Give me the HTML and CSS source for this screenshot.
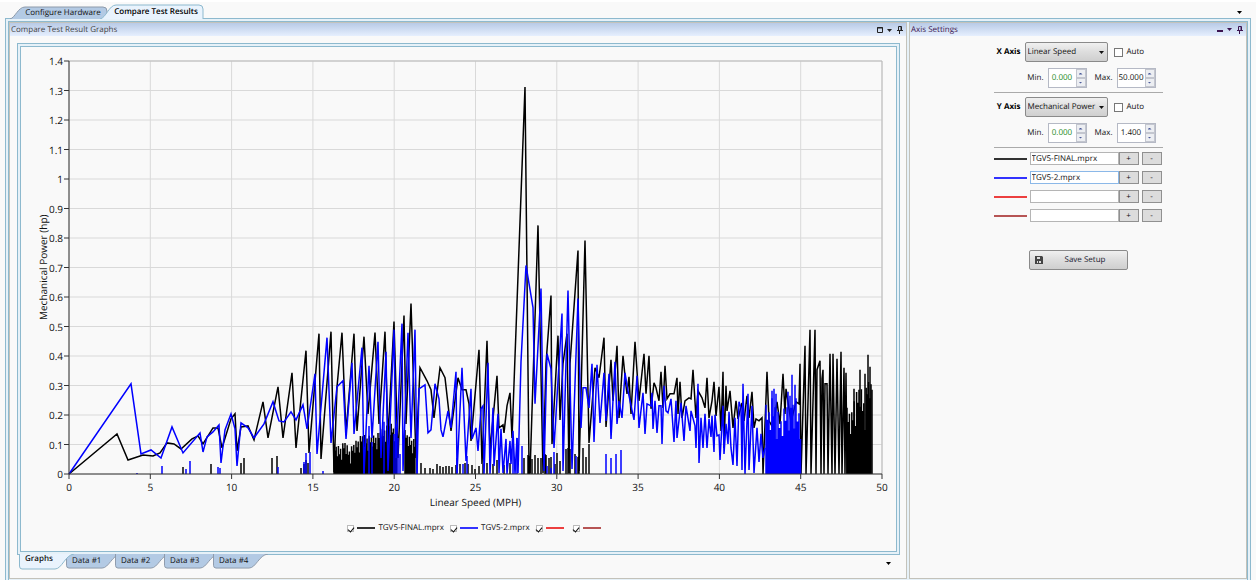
FILE: index.html
```html
<!DOCTYPE html>
<html lang="en">
<head>
    <meta charset="UTF-8">
    <meta name="viewport" content="width=device-width, initial-scale=1.0">
    <title>Compare Test Results</title>
    <link rel="stylesheet" href="styles.css">
</head>
<body>
    <!-- Main tabs -->
    <nav class="top-tabs">
        <button class="top-tab" type="button">
            <svg class="tab-shape" viewBox="0 0 98 13" preserveAspectRatio="none"><path d="M0 13 C5 12 8 1 15 1 H93 Q97 1 97 5 V13"/></svg>
            <span>Configure Hardware</span>
        </button>
        <button class="top-tab top-tab-active" type="button">
            <svg class="tab-shape" viewBox="0 0 104 15" preserveAspectRatio="none"><path d="M0 15 C6 14 9 1 16 1 H99 Q103 1 103 5 V15"/></svg>
            <span>Compare Test Results</span>
        </button>
        <button class="arrow-button" type="button" aria-label="Tab list"></button>
    </nav>

    <main class="frame">
        <section class="panel graph-panel">
            <header class="panel-header">
                <h1>Compare Test Result Graphs</h1>
                <svg class="panel-icons" width="28" height="8" viewBox="0 0 28 8">
                    <path d="M1.5 1.5h5v5h-5zM1 2h6" fill="none" stroke="currentColor"/>
                    <path d="M11 3h5l-2.5 3z" fill="currentColor"/>
                    <path d="M22.5 4.5V.5h3v4M21 4.5h6M23.5 5v3M25 1v4" fill="none" stroke="currentColor"/>
                </svg>
            </header>

            <div class="chart-frame">
                <div class="chart">
                    <div class="y-title">Mechanical Power (hp)</div>
                    <div class="y-labels" id="y-labels"></div>
                    <svg class="plot" id="plot" viewBox="0 0 813 412" preserveAspectRatio="none"></svg>
                    <div class="x-labels" id="x-labels"></div>
                    <div class="x-title">Linear Speed (MPH)</div>
                    <div class="legend">
                        <label class="legend-item"><input type="checkbox" checked><i class="line line-black"></i><span>TGV5-FINAL.mprx</span></label>
                        <label class="legend-item"><input type="checkbox" checked><i class="line line-blue"></i><span>TGV5-2.mprx</span></label>
                        <label class="legend-item"><input type="checkbox" checked aria-label="Series 3"><i class="line line-red"></i><span></span></label>
                        <label class="legend-item"><input type="checkbox" checked aria-label="Series 4"><i class="line line-brown"></i><span></span></label>
                    </div>
                </div>
            </div>

            <!-- Tabs below the graph -->
            <nav class="bottom-tabs">
                <button class="bottom-tab bottom-tab-active" type="button">
                    <svg class="tab-shape" viewBox="0 0 55 16" preserveAspectRatio="none"><path d="M.5 0 V12 Q.5 15 3 15 H36 C43 15 46 1 55 0"/></svg>
                    <span>Graphs</span>
                </button>
                <button class="bottom-tab" type="button">
                    <svg class="tab-shape" viewBox="0 0 55 16" preserveAspectRatio="none"><path d="M.5 0 V12 Q.5 15 3 15 H36 C43 15 46 1 55 0"/></svg>
                    <span>Data #1</span>
                </button>
                <button class="bottom-tab" type="button">
                    <svg class="tab-shape" viewBox="0 0 55 16" preserveAspectRatio="none"><path d="M.5 0 V12 Q.5 15 3 15 H36 C43 15 46 1 55 0"/></svg>
                    <span>Data #2</span>
                </button>
                <button class="bottom-tab" type="button">
                    <svg class="tab-shape" viewBox="0 0 55 16" preserveAspectRatio="none"><path d="M.5 0 V12 Q.5 15 3 15 H36 C43 15 46 1 55 0"/></svg>
                    <span>Data #3</span>
                </button>
                <button class="bottom-tab" type="button">
                    <svg class="tab-shape" viewBox="0 0 55 16" preserveAspectRatio="none"><path d="M.5 0 V12 Q.5 15 3 15 H36 C43 15 46 1 55 0"/></svg>
                    <span>Data #4</span>
                </button>
                <button class="arrow-button" type="button" aria-label="Tab list"></button>
            </nav>
        </section>

        <section class="panel side-panel">
            <header class="panel-header panel-header-active">
                <h2>Axis Settings</h2>
                <svg class="panel-icons" width="28" height="8" viewBox="0 0 28 8">
                    <path d="M1 4h6v2H1z" fill="currentColor"/>
                    <path d="M11 2h5l-2.5 3z" fill="currentColor"/>
                    <path d="M22.5 4.5V.5h3v4M21 4.5h6M23.5 5v3M25 1v4" fill="none" stroke="currentColor"/>
                </svg>
            </header>

            <form class="settings">
                <!-- X axis -->
                <div class="axis-group">
                    <div class="axis-row">
                        <label class="axis-name" for="x-source">X Axis</label>
                        <select id="x-source"><option>Linear Speed</option></select>
                        <label class="auto"><input type="checkbox">Auto</label>
                    </div>
                    <div class="range-row">
                        <label for="x-min">Min.</label>
                        <div class="spinner">
                            <input class="green" id="x-min" type="text" value="0.000">
                            <div class="spin-buttons"><button type="button" aria-label="Up"></button><button type="button" aria-label="Down"></button></div>
                        </div>
                        <label for="x-max">Max.</label>
                        <div class="spinner">
                            <input id="x-max" type="text" value="50.000">
                            <div class="spin-buttons"><button type="button" aria-label="Up"></button><button type="button" aria-label="Down"></button></div>
                        </div>
                    </div>
                </div>

                <!-- Y axis -->
                <div class="axis-group">
                    <div class="axis-row">
                        <label class="axis-name" for="y-source">Y Axis</label>
                        <select id="y-source"><option>Mechanical Power</option></select>
                        <label class="auto"><input type="checkbox">Auto</label>
                    </div>
                    <div class="range-row">
                        <label for="y-min">Min.</label>
                        <div class="spinner">
                            <input class="green" id="y-min" type="text" value="0.000">
                            <div class="spin-buttons"><button type="button" aria-label="Up"></button><button type="button" aria-label="Down"></button></div>
                        </div>
                        <label for="y-max">Max.</label>
                        <div class="spinner">
                            <input id="y-max" type="text" value="1.400">
                            <div class="spin-buttons"><button type="button" aria-label="Up"></button><button type="button" aria-label="Down"></button></div>
                        </div>
                    </div>
                </div>

                <!-- Files -->
                <div class="files">
                    <div class="file-row">
                        <i class="line line-black"></i>
                        <input type="text" value="TGV5-FINAL.mprx" aria-label="File 1">
                        <button type="button">+</button>
                        <button type="button">-</button>
                    </div>
                    <div class="file-row">
                        <i class="line line-blue"></i>
                        <input class="selected" type="text" value="TGV5-2.mprx" aria-label="File 2">
                        <button type="button">+</button>
                        <button type="button">-</button>
                    </div>
                    <div class="file-row">
                        <i class="line line-red"></i>
                        <input type="text" aria-label="File 3">
                        <button type="button">+</button>
                        <button type="button">-</button>
                    </div>
                    <div class="file-row">
                        <i class="line line-brown"></i>
                        <input type="text" aria-label="File 4">
                        <button type="button">+</button>
                        <button type="button">-</button>
                    </div>
                </div>

                <button class="save-button" type="button">
                    <svg width="8" height="8" viewBox="0 0 8 8"><path d="M0 0h7l1 1v7H0z" fill="#444"/><path d="M2 1h3v2H2zM2 5h4v2H2z" fill="#ddd"/><path d="M3 5h1v2H3z" fill="#444"/></svg>
                    <span>Save Setup</span>
                </button>
            </form>
        </section>
    </main>

    <script src="chart.js"></script>
</body>
</html>
```

FILE: styles.css
```css
* {
    box-sizing: border-box;
}

body {
    margin: 0;
    padding: 2px 5px 0;
    height: 100vh;
    overflow: hidden;
    display: flex;
    flex-direction: column;
    font-family: "Open Sans", "Noto Sans", sans-serif;
    font-size: 8px;
    line-height: 12px;
    text-rendering: geometricPrecision;
    color: #111;
    background: linear-gradient(#fff 2px, #f9f9f9 2px);
}

button, input, select {
    margin: 0;
    padding: 0;
    font: inherit;
    color: inherit;
    text-rendering: inherit;
    border-radius: 0;
}

/* Tabs */
.top-tabs {
    display: flex;
    align-items: flex-end;
    height: 17px;
    padding: 0 9px 0 5px;
    margin-bottom: -1px;
    z-index: 1;
}

.top-tab, .bottom-tab {
    position: relative;
    border: none;
    background: none;
}

.top-tab {
    width: 98px;
    height: 13px;
    padding-left: 8px;
}

.top-tab-active {
    width: 104px;
    height: 15px;
    margin-left: -8px;
    font-weight: 600;
    color: #000;
}

.top-tab span, .bottom-tab span {
    position: relative;
    display: block;
    white-space: nowrap;
}

.tab-shape {
    position: absolute;
    inset: 0;
    width: 100%;
    height: 100%;
}

.tab-shape path {
    fill: #b3cae4;
    stroke: #8d9aaa;
}

.top-tab-active .tab-shape path, .bottom-tab-active .tab-shape path {
    fill: #e9f3fd;
    stroke: #8db9ce;
}

.arrow-button {
    width: 5px;
    height: 3px;
    margin-left: auto;
    border: none;
    background: #000;
    clip-path: polygon(0 0, 100% 0, 50% 100%);
}

.top-tabs .arrow-button {
    margin-bottom: 5px;
}

/* Double line around the content */
.frame, .chart-frame {
    border: 1px solid #8db9ce;
    background: #e6f1f8;
    padding: 2px;
}

/* The bottom edge runs off the window */
.frame {
    flex: 1;
    min-height: 0;
    display: flex;
    gap: 2px;
    margin-bottom: -5px;
    padding: 3px 3px 5px;
    outline: 1px solid #8db9ce;
    outline-offset: -4px;
}

.panel {
    display: flex;
    flex-direction: column;
    border: 1px solid #c3c2ba;
    background: #f9f9f9;
}

.graph-panel {
    flex: 1;
    min-width: 0;
}

.side-panel {
    width: 338px;
}

.panel-header {
    display: flex;
    justify-content: space-between;
    align-items: center;
    height: 13px;
    padding: 0 2px 0 1px;
    color: #444;
    background: linear-gradient(#b8cae6, #e6effe);
}

.panel-header h1, .panel-header h2 {
    margin: 0;
    font-size: 8px;
    font-weight: normal;
}

.panel-header-active {
    color: #3c1450;
}

.graph-panel .panel-icons {
    color: #222;
}

.chart-frame {
    flex: 1;
    min-height: 0;
    display: flex;
    margin: 7px 6px 0 7px;
}

/* Chart */
.chart {
    flex: 1;
    display: grid;
    grid-template-columns: 12px 14px 1fr;
    grid-template-rows: 1fr auto auto auto;
    padding: 14px 14px 17px 16px;
    border: 1px solid #8db9ce;
    background: #f9f9f9;
    font-size: 10px;
    line-height: 14px;
}

.y-title {
    writing-mode: vertical-rl;
    transform: rotate(180deg);
    text-align: center;
    line-height: 12px;
}

.y-labels {
    display: flex;
    flex-direction: column;
    justify-content: space-between;
    text-align: right;
}

.y-labels span {
    height: 0;
    line-height: 0;
}

.plot {
    display: block;
    width: calc(100% - 6px);
    height: 100%;
    min-height: 0;
    margin-left: 6px;
    overflow: visible;
}

.plot path {
    fill: none;
    vector-effect: non-scaling-stroke;
}

.plot .grid-lines {
    stroke: #d9d9d9;
}

.plot .edge {
    stroke: #bbb;
}

.plot .axis {
    stroke: #333;
}

.plot .black {
    stroke: #000;
    stroke-width: 1.5px;
}

.plot .blue {
    stroke: #00f;
    stroke-width: 1.5px;
}

.x-labels, .x-title, .legend {
    grid-column: 3;
    margin-left: 6px;
}

.x-labels {
    display: flex;
    justify-content: space-between;
    padding-top: 6px;
}

.x-labels span {
    width: 0;
    display: flex;
    justify-content: center;
}

.x-title {
    margin-top: 1px;
    text-align: center;
}

.legend {
    display: flex;
    justify-content: center;
    gap: 6px;
    margin-top: 13px;
    font-size: 8px;
    line-height: 12px;
}

.legend-item {
    display: flex;
    align-items: center;
    gap: 3px;
}

.legend-item input {
    appearance: none;
    display: flex;
    justify-content: center;
    width: 7px;
    height: 7px;
    border: 1px solid #bbb;
    background: #fff;
}

.legend-item input:checked::before {
    content: "";
    width: 3px;
    height: 5px;
    border: solid #111;
    border-width: 0 1px 1px 0;
    transform: rotate(40deg);
}

.line {
    width: 18px;
    height: 2px;
    background: #000;
    opacity: 0.8;
}

.line-blue {
    background: #00f;
}

.line-red {
    background: #e81010;
}

.line-brown {
    background: #a52a2a;
}

.bottom-tabs {
    display: flex;
    align-items: flex-start;
    height: 24px;
    padding: 0 15px 0 9px;
    margin-top: -1px;
}

.bottom-tab {
    display: flex;
    align-items: flex-start;
    width: 55px;
    height: 15px;
    margin-right: -6px;
    padding: 2px 0 0 6px;
    line-height: 10px;
}

.bottom-tab-active {
    height: 16px;
    margin-right: -8px;
    padding-top: 0;
    z-index: 1;
    font-weight: 600;
}

.bottom-tabs .arrow-button {
    margin-top: 8px;
}

/* Axis settings */
.settings {
    width: 169px;
    margin: 6px auto 0;
}

.axis-group {
    padding-bottom: 4px;
    margin-bottom: 4px;
    border-bottom: 1px solid #aaa;
}

.axis-row, .range-row, .file-row {
    display: flex;
    align-items: center;
}

.axis-row {
    height: 20px;
    margin-bottom: 6px;
}

.axis-name {
    width: 31px;
    padding-right: 4px;
    text-align: right;
    font-weight: bold;
    color: #000;
}

select {
    appearance: none;
    width: 83px;
    height: 20px;
    padding-left: 2px;
    border: 1px solid #8a8a8a;
    border-radius: 2px;
    background:
        url("data:image/svg+xml,%3Csvg xmlns='http://www.w3.org/2000/svg' width='5' height='3'%3E%3Cpath d='M0 0h5L2.5 3z' fill='%23111'/%3E%3C/svg%3E") right 3px center no-repeat,
        linear-gradient(#f0f0f0, #ddd 50%, #cfcfcf);
}

.auto {
    display: flex;
    align-items: center;
    gap: 4px;
    margin-left: 6px;
}

.auto input {
    appearance: none;
    width: 9px;
    height: 9px;
    border: 1px solid #777;
    background: #fff;
}

.range-row {
    height: 20px;
}

.range-row label {
    width: 54px;
    padding-right: 4px;
    text-align: right;
}

.range-row .spinner + label {
    width: 30px;
}

.spinner {
    display: flex;
    width: 39px;
    height: 20px;
    border: 1px solid #b5b9c5;
    background: #fff;
}

.spinner input {
    flex: 1;
    min-width: 0;
    border: none;
    text-align: center;
    background: none;
}

.spinner .green {
    color: #1a8a1a;
}

.spin-buttons {
    display: flex;
    flex-direction: column;
    width: 10px;
}

.spin-buttons button {
    flex: 1;
    display: flex;
    align-items: center;
    justify-content: center;
    border: 1px solid #c3c6cf;
    background: #eceef2;
}

.spin-buttons button::before {
    content: "";
    width: 4px;
    height: 2px;
    background: #4a5a9a;
    clip-path: polygon(50% 0, 100% 100%, 0 100%);
}

.spin-buttons button:last-child::before {
    clip-path: polygon(0 0, 100% 0, 50% 100%);
}

.file-row {
    height: 13px;
    margin-bottom: 6px;
}

.file-row .line {
    width: 33px;
    margin-right: 3px;
}

.file-row input {
    width: 89px;
    height: 13px;
    padding-left: 1px;
    border: 1px solid #b5b5b5;
    background: #fff;
}

.file-row .selected {
    border-color: #8bb8e8;
}

.file-row button {
    width: 20px;
    height: 13px;
    border: 1px solid #909090;
    background: #dcdcdc;
    line-height: 10px;
}

.file-row button:last-child {
    margin-left: 3px;
}

.save-button {
    display: flex;
    align-items: center;
    width: 99px;
    height: 20px;
    margin: 28px 0 0 35px;
    padding: 0 5px;
    border: 1px solid #8a8a8a;
    border-radius: 2px;
    background: linear-gradient(#f0f0f0, #ddd 50%, #cfcfcf);
    color: #223;
}

.save-button span {
    flex: 1;
    padding-left: 6px;
}
```

FILE: chart.js
```js
// Plot area is 813 x 412 units: 0-50 MPH across, 0-1.4 hp up
const W = 813;
const H = 412;

const black = [
    [0,412],[48,372],[59,398],[74,393],[84,394],[91,391],[98,381],[105,382],[112,387],[123,377],[129,374],[134,382],
    [144,366],[149,366],[153,386],[162,357],[166,352],[168,389],[172,365],[179,364],[185,378],[194,340],[199,376],
    [209,325],[214,376],[223,311],[227,386],[237,289],[240,391],[250,272],[252,397],[262,270],[265,410],[268,325],
    [273,271],[277,371],[285,272],[288,369],[295,275],[299,352],[306,271],[310,362],[316,270],[319,376],[325,260],
    [329,396],[335,254],[337,362],[342,242],[347,396],[351,306],[358,319],[362,328],[365,356],[371,306],[376,316],
    [382,369],[389,316],[393,328],[397,328],[400,342],[402,379],[410,288],[413,402],[418,279],[421,389],[428,314],
    [430,366],[434,363],[435,371],[438,344],[441,331],[443,376],[456,26],[460,402],[461,411],[469,164],[474,411],
    [477,302],[482,234],[483,382],[489,274],[491,358],[494,302],[498,272],[500,411],[501,302],[509,189],[510,409],
    [516,179],[520,381],[526,306],[530,316],[535,276],[537,365],[542,298],[544,339],[548,284],[550,356],[554,294],
    [557,324],[558,332],[560,315],[562,352],[566,280],[570,339],[575,292],[577,332],[580,294],[582,347],[585,321],
    [587,326],[590,339],[592,310],[594,346],[596,304],[598,337],[601,332],[605,332],[608,316],[609,352],[611,320],
    [613,356],[616,339],[620,336],[622,337],[624,308],[627,356],[629,329],[633,336],[636,346],[638,316],[640,356],
    [643,339],[645,320],[647,354],[650,325],[652,369],[654,310],[655,386],[657,324],[658,349],[661,329],[664,366],
    [667,339],[669,357],[673,341],[675,359],[678,334],[680,356],[683,330],[685,366],[687,357],[690,359],[693,356],
    [694,412],[696,362],[698,310],[700,359],[704,366],[708,340],[711,362],[714,312],[716,352],[717,327],[722,360],
    [727,340],[730,342],[731,302],[732,412],[736,284],[737,412],[741,268],[742,412],[746,268],[747,412],[748,308],
    [751,299],[752,412],[753,317],[754,308],[755,412],[756,322],[758,322],[759,412],[761,292],[763,412],[764,292],
    [766,412],[768,297],[770,412],[772,290],[773,412],[775,306],[776,412],[777,311],[778,412]
];

const blue = [
    [0,412],[62,322],[72,392],[82,388],[92,396],[103,365],[114,391],[131,371],[134,390],[138,375],[144,370],[150,363],
    [152,401],[156,368],[162,352],[166,367],[168,404],[172,361],[179,366],[185,376],[195,362],[204,340],[210,359],
    [215,360],[222,350],[227,358],[234,343],[238,367],[246,312],[248,392],[258,276],[262,381],[268,325],[274,319],
    [277,377],[283,301],[285,372],[293,286],[295,412],[300,304],[303,376],[309,280],[312,396],[317,290],[319,409],
    [325,268],[327,396],[333,262],[334,409],[339,271],[342,376],[346,268],[348,412],[350,327],[356,323],[359,371],
    [362,368],[366,322],[370,337],[372,368],[374,375],[379,349],[382,366],[387,310],[388,411],[393,306],[397,399],
    [402,327],[403,377],[407,366],[409,389],[412,347],[414,344],[415,412],[419,301],[421,412],[424,346],[425,404],
    [429,352],[430,411],[432,367],[434,411],[437,377],[438,412],[441,379],[442,402],[444,369],[446,412],[448,376],
    [449,411],[452,300],[457,204],[464,246],[466,342],[472,227],[475,409],[478,292],[482,307],[485,386],[493,252],
    [494,409],[499,229],[503,407],[509,237],[512,366],[514,326],[517,326],[520,346],[523,302],[525,380],[528,303],
    [531,361],[535,311],[537,359],[540,312],[542,377],[546,300],[548,362],[550,339],[553,356],[556,311],[559,329],
    [565,358],[568,314],[570,366],[574,331],[576,372],[578,342],[582,344],[583,331],[584,367],[586,339],[588,371],
    [590,344],[592,344],[593,382],[595,324],[597,349],[599,351],[602,337],[605,380],[607,339],[608,376],[612,341],
    [615,379],[617,344],[621,369],[622,349],[626,364],[627,386],[629,322],[630,401],[632,356],[634,386],[636,352],
    [638,386],[640,357],[642,375],[643,354],[645,390],[646,353],[648,374],[650,373],[651,398],[654,344],[655,392],
    [657,362],[659,382],[660,350],[662,386],[664,403],[666,356],[668,404],[670,340],[672,346],[673,408],[674,322],
    [676,412],[679,332],[680,408],[683,344],[685,411],[688,366],[690,400],[692,372],[694,396],[696,386]
];

// Short bursts along the baseline: [x, top]
const blackBars = [
    [114,405],[142,402],[172,401],[175,396],[203,396],[208,394],[232,406],[235,402],[237,398],[239,401],
    [352,401],[356,406],[361,406],[364,407],[368,402],[371,404],[374,405],[377,404],[380,404],[383,405],[387,403],
    [391,402],[396,401],[399,402],[403,403],[406,407],[410,404],[414,402],[418,401],[424,402],[428,398],[435,403],
    [441,401],[455,396],[459,393],[460,394],[461,396],[463,397],[466,393],[469,396],[472,396],[476,392],[477,393],
    [480,396],[482,395],[486,402],[488,391],[491,399],[497,387],[499,386],[501,387],[506,392],[509,395],[510,394],
    [514,386],[517,395],[520,382],[785,327],[791,308],[796,312],[799,293],[801,305],[803,328]
];
const blueBars = [
    [68,411],[93,404],[117,407],[121,399],[149,405],[151,406],[209,405],[235,400],[237,391],[241,390],[254,409],
    [295,385],[300,364],[303,380],[315,360],[325,372],[327,362],[329,376],[331,392],[348,370],[388,396],[394,402],
    [398,394],[444,380],[448,376],[453,384],[478,404],[482,406],[485,390],[507,394],[537,392],[542,396],[547,392],
    [552,388],[703,329],[705,327],[707,332],[719,330],[723,313],[726,323]
];

// Envelopes that are filled with full height strokes: [x, top]
const startBurst = [[265,382],[271,384],[276,379],[281,387],[284,382],[288,377],[294,372],[301,374],[308,372],[314,366],[322,361],[328,366]];
const endOfStart = [[336,368],[340,374],[344,376],[347,380]];
const blueEnd = [[697,343],[701,347],[703,335],[706,338],[709,350],[712,355],[716,342],[719,336],[723,332],[725,345],[727,335],[729,344],[732,344]];
const blackEnd = [[778,346],[783,349],[785,332],[788,330],[791,320],[794,333],[796,335],[798,320],[801,312],[803,330]];

const dips = [0, 9, 3, 16, 1, 12, 5, 22];

function fill(envelope, step, spread) {
    const bars = [];
    let n = 0;
    for (let x = envelope[0][0]; x < envelope[envelope.length - 1][0]; x += step) {
        const i = envelope.findIndex(p => p[0] > x);
        const [x1, y1] = envelope[i - 1];
        const [x2, y2] = envelope[i];
        bars.push([x, y1 + (y2 - y1) * (x - x1) / (x2 - x1) + dips[n++ % dips.length] * spread]);
    }
    return bars;
}

function linePath(points) {
    return 'M' + points.map(p => p.join(' ')).join('L');
}

function barPath(bars) {
    return bars.map(([x, y]) => `M${x} ${H}V${y}`).join('');
}

const plot = document.getElementById('plot');

function addPath(d, className) {
    const path = document.createElementNS('http://www.w3.org/2000/svg', 'path');
    path.setAttribute('d', d);
    path.setAttribute('class', className);
    plot.appendChild(path);
}

function addLabel(id, text) {
    const span = document.createElement('span');
    span.textContent = text;
    document.getElementById(id).appendChild(span);
}

// Grid, ticks and labels
let grid = '';
let ticks = '';
for (let i = 0; i <= 10; i++) {
    const x = i * W / 10;
    grid += `M${x} 0V${H}`;
    ticks += `M${x} ${H}v5`;
    addLabel('x-labels', i * 5);
}
for (let i = 0; i <= 14; i++) {
    const y = i * H / 14;
    grid += `M0 ${y}H${W}`;
    ticks += `M-5 ${y}h5`;
    addLabel('y-labels', (14 - i) / 10);
}

addPath(grid, 'grid-lines');
addPath(`M0 0H${W}V${H}`, 'edge');
addPath(linePath(black), 'black');
addPath(barPath(fill(startBurst, 1.1, 0.7)), 'black');
addPath(barPath(fill(endOfStart, 1.1, 0.7)), 'black');
addPath(barPath(blackBars), 'black');
addPath(barPath(fill(blackEnd, 1.2, 1.5)), 'black');
addPath(linePath(blue), 'blue');
addPath(barPath(fill(blueEnd, 1.5, 1.5)), 'blue');
addPath(barPath(blueBars), 'blue');
addPath(`M0 0V${H}H${W}` + ticks, 'axis');
```
